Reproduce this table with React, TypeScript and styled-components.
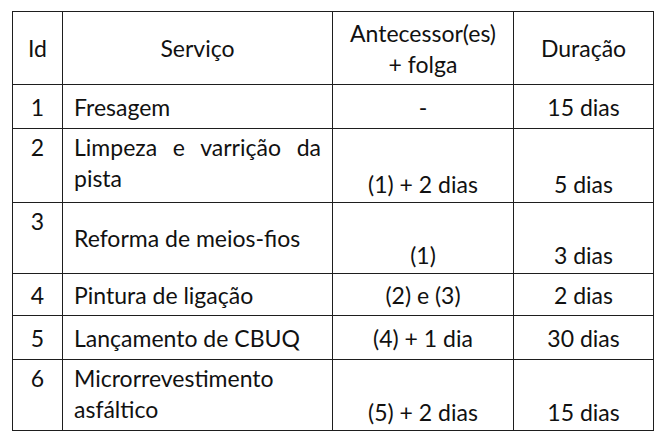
import React from 'react';
import styled, { createGlobalStyle } from 'styled-components';

//

const GlobalStyle = createGlobalStyle`
    html, body {
        margin: 0;
        padding: 0;
        background: #fff;
    }
    body {
        font-family: Lato, "Open Sans", sans-serif;
        color: #111;
    }
`;

const Page = styled.div`
    width: 665px;
    height: 445px;
    padding: 11px 0 0 12px;
    box-sizing: border-box;
`;

const Table = styled.table`
    border-collapse: collapse;
    table-layout: fixed;
    width: 641px;
    font-size: 23px;
    line-height: 31px;
`;

const Row = styled.tr<{ $h: number }>`
    height: ${(p) => p.$h}px;
`;

const Cell = styled.td<{ $align?: string; $valign?: string; $justify?: boolean }>`
    border: 1.5px solid #1e1e1e;
    padding: 3px 11px 2px;
    text-align: ${(p) => (p.$justify ? 'justify' : p.$align || 'center')};
    text-align-last: ${(p) => (p.$justify ? 'left' : 'auto')};
    vertical-align: ${(p) => p.$valign || 'middle'};
    box-sizing: border-box;
`;

type Item = {
    id: string;
    idAlign?: string;
    service: string;
    serviceAlign?: string;
    justify?: boolean;
    prev: string;
    time: string;
    tailAlign?: string;
    h: number;
};

const rows: Item[] = [
    { id: '1', service: 'Fresagem', prev: '-', time: '15 dias', h: 44 },
    { id: '2', idAlign: 'top', service: 'Limpeza e varrição da pista', serviceAlign: 'top', justify: true, prev: '(1) + 2 dias', time: '5 dias', tailAlign: 'bottom', h: 74 },
    { id: '3', idAlign: 'top', service: 'Reforma de meios-fios', prev: '(1)', time: '3 dias', tailAlign: 'bottom', h: 71 },
    { id: '4', service: 'Pintura de ligação', prev: '(2) e (3)', time: '2 dias', h: 42 },
    { id: '5', service: 'Lançamento de CBUQ', prev: '(4) + 1 dia', time: '30 dias', h: 44 },
    { id: '6', idAlign: 'top', service: 'Microrrevestimento asfáltico', serviceAlign: 'top', prev: '(5) + 2 dias', time: '15 dias', tailAlign: 'bottom', h: 71 },
];

export default function App() {
    return (
        <Page>
            <GlobalStyle />
            <Table>
                <colgroup>
                    <col style={{ width: 50 }} />
                    <col style={{ width: 270 }} />
                    <col style={{ width: 181 }} />
                    <col style={{ width: 140 }} />
                </colgroup>
                <tbody>
                    <Row $h={73}>
                        <Cell>Id</Cell>
                        <Cell>Serviço</Cell>
                        <Cell>Antecessor(es)<br />+ folga</Cell>
                        <Cell>Duração</Cell>
                    </Row>
                    {rows.map((r) => (
                        <Row key={r.id} $h={r.h}>
                            <Cell $valign={r.idAlign}>{r.id}</Cell>
                            <Cell $align="left" $valign={r.serviceAlign} $justify={r.justify}>{r.service}</Cell>
                            <Cell $valign={r.tailAlign}>{r.prev}</Cell>
                            <Cell $valign={r.tailAlign}>{r.time}</Cell>
                        </Row>
                    ))}
                </tbody>
            </Table>
        </Page>
    );
}
